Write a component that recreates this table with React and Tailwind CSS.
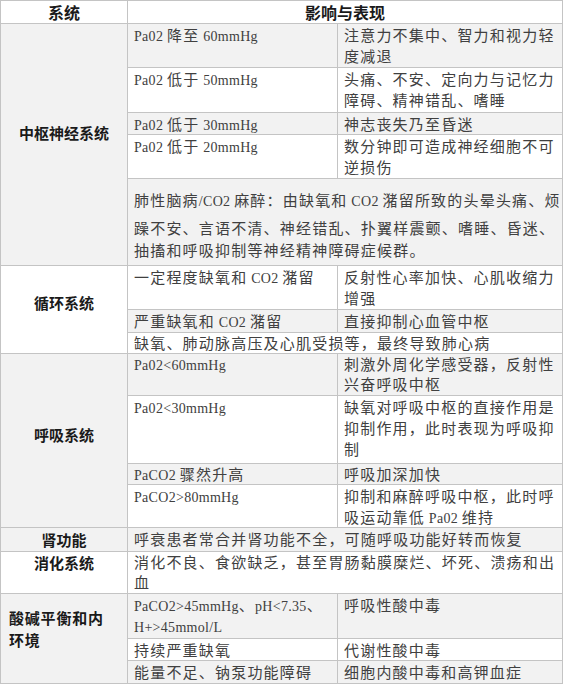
const ascii = /^[\x00-\x7F]+$/

// ascii runs get the narrow serif face, CJK keeps the wider spaced face
const Txt = ({ lines }) => (
  <>
    {lines.map((line, li) => (
      <span key={li}>
        {li > 0 && <br />}
        {line.split(/([\x00-\x7F]+)/).map((p, i) =>
          ascii.test(p) ? (
            <span key={i} className="font-['Liberation_Serif'] text-[14px] leading-none tracking-[0.3px]">{p}</span>
          ) : (
            p
          )
        )}
      </span>
    ))}
  </>
)

const gray = "bg-[#f2f2f2]"
const cell = "border border-[#c4c4c4] align-top px-[6px] whitespace-nowrap"
const label = "border border-[#c4c4c4] align-middle text-center font-bold text-[15px] text-[#1a1a1a] tracking-normal"

const Row = ({ h, bg, a, b, tight }) => (
  <tr className={`${h} ${bg ? gray : "bg-white"} ${tight ? "leading-[20px]" : ""}`}>
    <td className={cell}><Txt lines={a} /></td>
    <td className={cell}><Txt lines={b} /></td>
  </tr>
)

const Wide = ({ h, bg, lines, tight }) => (
  <tr className={`${h} ${bg ? gray : "bg-white"} ${tight ? "leading-[20px]" : ""}`}>
    <td colSpan={2} className={cell}><Txt lines={lines} /></td>
  </tr>
)

export default function App() {
  return (
    <div className="w-[564px] h-[684px] bg-white overflow-hidden font-['Noto_Sans_CJK_SC',sans-serif] text-[15px] leading-[21px] tracking-[1.2px] text-[#404040]">
      <table className="w-[562px] border-collapse table-fixed">
        <colgroup>
          <col className="w-[127px]" />
          <col className="w-[210px]" />
          <col className="w-[225px]" />
        </colgroup>
        <tbody>
          <tr className="h-[23px] bg-white leading-[20px]">
            <th className="border border-[#c4c4c4] text-center font-bold text-[16px] text-[#1a1a1a] tracking-normal">系统</th>
            <th colSpan={2} className="border border-[#c4c4c4] text-center font-bold text-[16px] text-[#1a1a1a] tracking-normal">影响与表现</th>
          </tr>

          <tr className={`h-[44px] ${gray}`}>
            <td rowSpan={5} className={`${label} ${gray} pb-[24px]`}>中枢神经系统</td>
            <td className={cell}><Txt lines={["Pa02 降至 60mmHg"]} /></td>
            <td className={cell}><Txt lines={["注意力不集中、智力和视力轻", "度减退"]} /></td>
          </tr>
          <Row h="h-[45px]" a={["Pa02 低于 50mmHg"]} b={["头痛、不安、定向力与记忆力", "障碍、精神错乱、嗜睡"]} />
          <Row h="h-[22px]" bg a={["Pa02 低于 30mmHg"]} b={["神志丧失乃至昏迷"]} />
          <Row h="h-[44px]" a={["Pa02 低于 20mmHg"]} b={["数分钟即可造成神经细胞不可", "逆损伤"]} />
          <tr className={`h-[87px] ${gray}`}>
            <td colSpan={2} className="border border-[#c4c4c4] align-top px-[6px] pt-[10px] whitespace-nowrap">
              <div className="leading-[22px] mb-[6px]"><Txt lines={["肺性脑病/CO2 麻醉：由缺氧和 CO2 潴留所致的头晕头痛、烦"]} /></div>
              <div className="leading-[22px]"><Txt lines={["躁不安、言语不清、神经错乱、扑翼样震颤、嗜睡、昏迷、", "抽搐和呼吸抑制等神经精神障碍症候群。"]} /></div>
            </td>
          </tr>

          <tr className="h-[44px] bg-white">
            <td rowSpan={3} className={`${label} bg-white pb-[14px]`}>循环系统</td>
            <td className={cell}><Txt lines={["一定程度缺氧和 CO2 潴留"]} /></td>
            <td className={cell}><Txt lines={["反射性心率加快、心肌收缩力", "增强"]} /></td>
          </tr>
          <Row h="h-[23px]" bg a={["严重缺氧和 CO2 潴留"]} b={["直接抑制心血管中枢"]} />
          <Wide h="h-[21px]" tight lines={["缺氧、肺动脉高压及心肌受损等，最终导致肺心病"]} />

          <tr className={`h-[42px] ${gray} leading-[20px]`}>
            <td rowSpan={4} className={`${label} ${gray} pb-[12px] leading-[21px]`}>呼吸系统</td>
            <td className={cell}><Txt lines={["Pa02<60mmHg"]} /></td>
            <td className={cell}><Txt lines={["刺激外周化学感受器，反射性", "兴奋呼吸中枢"]} /></td>
          </tr>
          <Row h="h-[68px]" a={["Pa02<30mmHg"]} b={["缺氧对呼吸中枢的直接作用是", "抑制作用，此时表现为呼吸抑", "制"]} />
          <Row h="h-[21px]" bg tight a={["PaCO2 骤然升高"]} b={["呼吸加深加快"]} />
          <Row h="h-[43px]" a={["PaCO2>80mmHg"]} b={["抑制和麻醉呼吸中枢，此时呼", "吸运动靠低 Pa02 维持"]} />

          <tr className={`h-[24px] ${gray}`}>
            <td className={`${label} ${gray}`}>肾功能</td>
            <td colSpan={2} className={cell}><Txt lines={["呼衰患者常合并肾功能不全，可随呼吸功能好转而恢复"]} /></td>
          </tr>
          <tr className="h-[42px] bg-white leading-[20px]">
            <td className={`${label} bg-white !align-top leading-[21px]`}>消化系统</td>
            <td colSpan={2} className={cell}><Txt lines={["消化不良、食欲缺乏，甚至胃肠黏膜糜烂、坏死、溃疡和出", "血"]} /></td>
          </tr>

          <tr className={`h-[45px] ${gray}`}>
            <td rowSpan={3} className={`border border-[#c4c4c4] align-middle text-left px-[8px] pb-[20px] font-bold text-[15px] tracking-[0.8px] leading-[22px] text-[#1a1a1a] ${gray}`}>
              酸碱平衡和内<br />环境
            </td>
            <td className={cell}><Txt lines={["PaCO2>45mmHg、pH<7.35、", "H+>45mmol/L"]} /></td>
            <td className={cell}><Txt lines={["呼吸性酸中毒"]} /></td>
          </tr>
          <Row h="h-[22px]" a={["持续严重缺氧"]} b={["代谢性酸中毒"]} />
          <Row h="h-[23px]" bg a={["能量不足、钠泵功能障碍"]} b={["细胞内酸中毒和高钾血症"]} />
        </tbody>
      </table>
    </div>
  )
}
